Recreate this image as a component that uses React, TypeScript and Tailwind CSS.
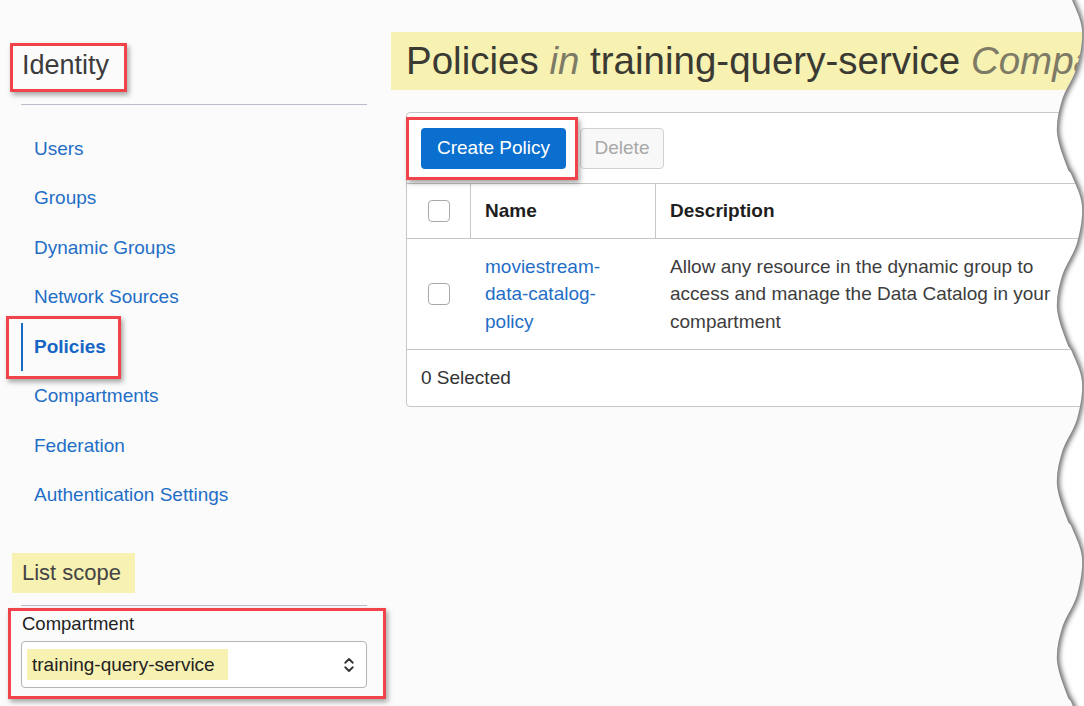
import { ChevronsUpDown } from 'lucide-react';
import type { ReactNode } from 'react';

const NAV = ['Users', 'Groups', 'Dynamic Groups', 'Network Sources', 'Policies', 'Compartments', 'Federation', 'Authentication Settings'];

// red annotation box drawn over an element
function Callout({ className }: { className: string }) {
  return <div className={`pointer-events-none absolute border-[3px] border-[#f2434a] shadow-[2px_3px_5px_rgba(0,0,0,0.35)] ${className}`} />;
}

function Check() {
  return <span className="block h-[22px] w-[22px] rounded-[4px] border border-[#a9a9a9] bg-white" />;
}

// keypoints of one period of the torn edge (y offset, x)
const WAVE: Array<[number, number]> = [[0, 1072], [30, 1082], [67, 1077], [100, 1062], [133, 1057], [167, 1067]];

function edgePoints() {
  const pts: Array<[number, number]> = [];
  for (let base = -176; base < 706 + 176; base += 176) {
    for (const [y, x] of WAVE) pts.push([x, base + y]);
  }
  return pts;
}

function tornPath() {
  const p = edgePoints();
  let d = `M${p[0][0]} ${p[0][1]}`;
  for (let i = 0; i < p.length - 1; i++) {
    const p0 = p[Math.max(0, i - 1)], p1 = p[i], p2 = p[i + 1], p3 = p[Math.min(p.length - 1, i + 2)];
    const c1 = [p1[0] + (p2[0] - p0[0]) / 6, p1[1] + (p2[1] - p0[1]) / 6];
    const c2 = [p2[0] - (p3[0] - p1[0]) / 6, p2[1] - (p3[1] - p1[1]) / 6];
    d += ` C${c1[0]} ${c1[1]} ${c2[0]} ${c2[1]} ${p2[0]} ${p2[1]}`;
  }
  return d;
}

function TornEdge() {
  const edge = tornPath();
  const fill = `${edge} L1100 900 L1100 -200 Z`;
  return (
    <svg className="pointer-events-none absolute right-0 top-0 h-[706px] w-[70px]" viewBox="1014 0 70 706">
      <defs>
        <clipPath id="torn-right"><path d={fill} /></clipPath>
        <filter id="torn-blur" x="-50%" y="-10%" width="200%" height="120%"><feGaussianBlur stdDeviation="2.4" /></filter>
      </defs>
      <path d={fill} fill="#ffffff" />
      <g clipPath="url(#torn-right)">
        <path d={edge} transform="translate(-1 0)" fill="none" stroke="#666" strokeWidth="7" filter="url(#torn-blur)" />
      </g>
    </svg>
  );
}

function Hl({ children, className }: { children: ReactNode; className: string }) {
  return <div className={`bg-[#f7f1b2] ${className}`}>{children}</div>;
}

export default function App() {
  return (
    <div className="relative flex h-[706px] w-[1084px] overflow-hidden bg-[#fbfbfb] text-[#333] font-['Liberation_Sans',Arial,sans-serif]">
      {/* sidebar */}
      <aside className="flex w-[391px] shrink-0 flex-col pl-[21px] pr-[24px]">
        <div className="relative mt-[47px] pl-[1px] text-[27px] leading-[36px] text-[#3c3c3c]">
          Identity
          <Callout className="left-[-11px] top-[-4px] h-[49px] w-[117px]" />
        </div>
        <div className="mt-[21px] h-px bg-[#b9bccb]" />
        <nav className="mt-[19px] flex flex-col">
          {NAV.map((n) => n === 'Policies' ? (
            <div key={n} className="relative flex h-[49.5px] items-center">
              <span className="absolute left-0 top-[1px] h-[48px] w-[2px] bg-[#1a6bc9]" />
              <span className="pl-[13px] text-[19px] font-bold text-[#1565c4]">{n}</span>
              <Callout className="left-[-15px] top-[-6px] h-[63px] w-[115px]" />
            </div>
          ) : (
            <a key={n} className="flex h-[49.5px] items-center pl-[13px] text-[19px] text-[#1f6ec6]">{n}</a>
          ))}
        </nav>
        <Hl className="ml-[-9px] mt-[33px] w-[123px] pl-[10px] text-[22px] leading-[40px] text-[#444]">List scope</Hl>
        <div className="mt-[12px] h-px bg-[#b9bccb]" />
        <div className="relative">
          <Callout className="left-[-13px] top-[2px] h-[91px] w-[378px]" />
          <div className="mt-[7px] pl-[1px] text-[18.5px] leading-[22px] text-[#1e1e1e]">Compartment</div>
          <div className="mt-[6px] flex h-[47px] items-center justify-between rounded-[4px] border border-[#b4b4b4] bg-white pl-[5px] pr-[8px]">
            <Hl className="pl-[5px] pr-[13px] text-[19px] leading-[31px] text-[#222]">training-query-service</Hl>
            <ChevronsUpDown size={18} strokeWidth={2.4} className="text-[#333]" />
          </div>
        </div>
      </aside>

      {/* main */}
      <main className="flex min-w-0 flex-1 flex-col">
        <Hl className="mt-[32px] h-[58px] whitespace-nowrap pl-[15px] text-[38.5px] leading-[58px] text-[#3a3a33]">
          Policies <i className="text-[#7d7a66]">in</i> training-query-service <i className="text-[#7d7a66]">Compartment</i>
        </Hl>
        <div className="ml-[15px] mt-[22px] w-[720px] rounded-[4px] border border-[#c6c6c6] bg-white text-[19px]">
          <div className="relative flex h-[70px] items-center gap-[14px] pl-[14px]">
            <button className="h-[41px] w-[145px] rounded-[4px] bg-[#0a6fcf] text-white">Create Policy</button>
            <button className="h-[41px] w-[84px] rounded-[4px] border border-[#d2d2d2] bg-[#f8f8f8] text-[#a8a8a8]">Delete</button>
            <Callout className="left-[-1px] top-[4px] h-[63px] w-[172px]" />
          </div>
          <div className="flex h-[56px] border-y border-[#c6c6c6] font-bold text-[#1e1e1e]">
            <div className="flex w-[64px] items-center justify-center border-r border-[#c6c6c6]"><Check /></div>
            <div className="flex w-[185px] items-center border-r border-[#c6c6c6] pl-[14px]">Name</div>
            <div className="flex flex-1 items-center pl-[14px]">Description</div>
          </div>
          <div className="flex h-[111px] border-b border-[#c6c6c6] leading-[27.5px]">
            <div className="flex w-[64px] items-center justify-center"><Check /></div>
            <div className="flex w-[185px] items-center pl-[14px] text-[#1f6ec6]">moviestream-<br />data-catalog-<br />policy</div>
            <div className="flex flex-1 items-center whitespace-nowrap pl-[14px] text-[#3d3d3d]">Allow any resource in the dynamic group to<br />access and manage the Data Catalog in your<br />compartment</div>
          </div>
          <div className="flex h-[56px] items-center pl-[14px] text-[#333]">0 Selected</div>
        </div>
      </main>

      <TornEdge />
    </div>
  );
}
